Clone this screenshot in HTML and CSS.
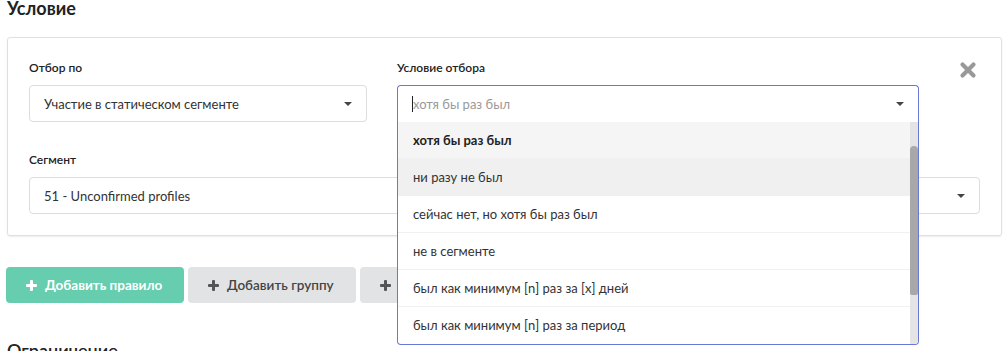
FILE: index.html
```html
<!DOCTYPE html>
<html lang="ru">
<head>
    <meta charset="UTF-8">
    <title>Условие</title>
    <link rel="stylesheet" href="styles.css">
</head>
<body>
    <div class="page">
        <h2 class="section-title">Условие</h2>

        <div class="rule-card">
            <div class="rule-grid">
                <div class="field">
                    <label class="field-label">Отбор по</label>
                    <div class="select">
                        <span class="select-value">Участие в статическом сегменте</span>
                        <span class="caret"></span>
                    </div>
                </div>

                <div class="field field-open">
                    <label class="field-label">Условие отбора</label>
                    <div class="select select-active">
                        <span class="select-search"><span class="cursor"></span>хотя бы раз был</span>
                        <span class="caret"></span>
                    </div>
                    <!-- выпадающий список -->
                    <div class="dropdown">
                        <ul class="options">
                            <li class="option selected">хотя бы раз был</li>
                            <li class="option hovered">ни разу не был</li>
                            <li class="option">сейчас нет, но хотя бы раз был</li>
                            <li class="option">не в сегменте</li>
                            <li class="option">был как минимум [n] раз за [x] дней</li>
                            <li class="option">был как минимум [n] раз за период</li>
                        </ul>
                        <div class="scrollbar"><div class="scroll-thumb"></div></div>
                    </div>
                </div>

                <button class="remove-btn" title="Удалить">
                    <svg width="18" height="18" viewBox="0 0 18 18">
                        <path d="M3.5 3.5L14.5 14.5M14.5 3.5L3.5 14.5" stroke="#999" stroke-width="4.2" stroke-linecap="round"/>
                    </svg>
                </button>

                <div class="field field-wide">
                    <label class="field-label">Сегмент</label>
                    <div class="select">
                        <span class="select-value">51 - Unconfirmed profiles</span>
                        <span class="caret"></span>
                    </div>
                </div>
            </div>
        </div>

        <div class="actions">
            <button class="btn btn-green"><span class="plus"></span>Добавить правило</button>
            <button class="btn btn-gray"><span class="plus"></span>Добавить группу</button>
            <button class="btn btn-gray"><span class="plus"></span>Добавить условие</button>
        </div>

        <h2 class="section-title section-next">Ограничение</h2>
    </div>
</body>
</html>
```

FILE: styles.css
```css
:root {
    --text: #333333;
    --label: #222222;
    --border: #dddddd;
    --focus: #6b77d4;
    --green: #66cdaf;
    --gray-btn: #e2e3e5;
}

* {
    margin: 0;
    padding: 0;
    box-sizing: border-box;
    font-family: Lato, 'Noto Sans', sans-serif;
}

body {
    background: #ffffff;
    color: var(--text);
    overflow: hidden;
}

.page {
    padding: 0 7px;
    margin-top: -4px;
}

.section-title {
    font-size: 18px;
    font-weight: 700;
    color: #222;
    line-height: 24px;
}

.section-next {
    margin-top: 35px;
    font-weight: 600;
}

.rule-card {
    margin-top: 17px;
    border: 1px solid #e0e0e0;
    border-radius: 3px;
    box-shadow: 0 1px 2px rgba(0,0,0,0.08);
    padding: 22px 21px 21px 21px;
    width: 995px;
}

.rule-grid {
    display: grid;
    grid-template-columns: 338px 522px 1fr;
    column-gap: 30px;
    row-gap: 30px;
}

.field-label {
    display: block;
    font-size: 12px;
    font-weight: 600;
    color: var(--label);
    line-height: 16px;
    margin-bottom: 9px;
}

.field-wide {
    grid-column: 1 / 4;
}

.select {
    height: 37px;
    border: 1px solid var(--border);
    border-radius: 4px;
    display: flex;
    align-items: center;
    justify-content: space-between;
    padding: 0 14px 0 14px;
    font-size: 13px;
    color: var(--text);
    background: #fff;
}

.caret {
    width: 0;
    height: 0;
    border-left: 4px solid transparent;
    border-right: 4px solid transparent;
    border-top: 4px solid #444;
}

.field-open {
    position: relative;
}

.select-active {
    border-color: var(--focus);
    border-bottom: none;
    border-radius: 4px 4px 0 0;
}

.select-search {
    color: #999;
    display: flex;
    align-items: center;
}

.cursor {
    width: 1px;
    height: 16px;
    background: #222;
}

.dropdown {
    position: absolute;
    left: 0;
    right: 0;
    top: 62px;
    border: 1px solid var(--focus);
    border-top: none;
    border-radius: 0 0 4px 4px;
    background: #fff;
    z-index: 5;
    display: flex;
    overflow: hidden;
}

.options {
    list-style: none;
    flex: 1;
}

.option {
    height: 37px;
    line-height: 36px;
    padding-left: 15px;
    font-size: 13px;
    color: var(--text);
    border-bottom: 1px solid #f0f0f0;
}

.option:last-child {
    border-bottom: none;
}

.option.selected {
    background: #f5f5f5;
    font-weight: 700;
    color: #222;
}

.option.hovered {
    background: #f0f0f0;
}

.scrollbar {
    width: 8px;
    background: #e4e4e4;
    padding-top: 24px;
}

.scroll-thumb {
    height: 149px;
    background: #a8a8a8;
    border-radius: 4px 4px 2px 2px;
}

.remove-btn {
    background: none;
    border: none;
    justify-self: start;
    align-self: start;
    margin-top: 1px;
    margin-left: 10px;
    cursor: pointer;
    height: 18px;
}

.actions {
    display: flex;
    gap: 4px;
    margin-top: 31px;
    margin-left: -1px;
}

.btn {
    height: 36px;
    border: none;
    border-radius: 4px;
    font-size: 13.5px;
    font-weight: 700;
    display: flex;
    align-items: center;
    gap: 8px;
    padding: 0 20px 0 20px;
    cursor: pointer;
}

.btn-green {
    background: var(--green);
    color: #fff;
    width: 178px;
}

.btn-gray {
    background: var(--gray-btn);
    color: #444;
    font-weight: 600;
    width: 168px;
}

.plus {
    position: relative;
    width: 11px;
    height: 11px;
    flex-shrink: 0;
}

.plus::before,
.plus::after {
    content: "";
    position: absolute;
    background: currentColor;
    border-radius: 1px;
}

.plus::before {
    left: 0;
    top: 4px;
    width: 11px;
    height: 3px;
}

.plus::after {
    left: 4px;
    top: 0;
    width: 3px;
    height: 11px;
}

.btn-gray .plus {
    color: #555;
}
```
